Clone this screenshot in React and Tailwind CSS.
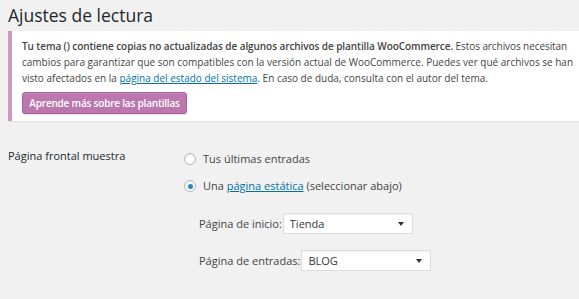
function Radio({ checked }) {
  return (
    <span className="w-[12px] h-[12px] rounded-full border border-[#b4b9be] bg-white shadow-[inset_0_1px_2px_rgba(0,0,0,0.1)] flex items-center justify-center shrink-0">
      {checked && <span className="w-[5px] h-[5px] rounded-full bg-[#1e8cbe]" />}
    </span>
  );
}

function Select({ value }) {
  return (
    <div className="w-[130px] h-[21px] bg-white border border-[#ddd] shadow-[inset_0_1px_2px_rgba(0,0,0,0.07)] flex items-center justify-between pl-[6px] pr-[8px] text-[#32373c]">
      <span>{value}</span>
      <span className="w-0 h-0 border-l-[3px] border-r-[3px] border-t-[4px] border-l-transparent border-r-transparent border-t-[#333]" />
    </div>
  );
}

export default function App() {
  return (
    <div
      className="w-[579px] h-[299px] bg-[#f1f1f1] overflow-hidden text-[11px] text-[#444]"
      style={{ fontFamily: "'Open Sans', 'Noto Sans', sans-serif" }}
    >
      <h1 className="pl-2 h-[31px] leading-[31px] text-[17.5px] font-normal text-[#23282d]">
        Ajustes de lectura
      </h1>

      <div className="ml-2 border-l-4 border-[#cc99c2] bg-white pl-[10px] pt-[7px] pb-[7px] shadow-[0_1px_1px_rgba(0,0,0,0.06)] text-[10px]">
        <div className="leading-[16px] whitespace-nowrap">
          <div className="tracking-[-0.08px]">
            <span className="font-semibold">
              Tu tema () contiene copias no actualizadas de algunos archivos de plantilla WooCommerce.
            </span>{" "}
            Estos archivos necesitan
          </div>
          <div>
            cambios para garantizar que son compatibles con la versión actual de WooCommerce. Puedes ver qué archivos se han
          </div>
          <div>
            visto afectados en la{" "}
            <a className="text-[#0073aa] underline">página del estado del sistema</a>. En caso de duda, consulta con el autor del tema.
          </div>
        </div>
        <div className="mt-[6px] w-[165px] h-[22px] flex items-center justify-center whitespace-nowrap rounded-[3px] bg-[#bb77ae] border border-[#a36597] shadow-[inset_0_1px_0_rgba(255,255,255,0.15),0_1px_0_rgba(0,0,0,0.1)] text-white text-[10px] tracking-[-0.2px] font-semibold">
          Aprende más sobre las plantillas
        </div>
      </div>

      <div className="pl-2 pt-[27px] flex">
        <div className="w-[176px] leading-[16px] font-medium text-[#23282d]">Página frontal muestra</div>
        <div className="pt-[3px] leading-[16px]">
          <div className="flex items-center gap-[7px] h-[16px]">
            <Radio />
            <span>Tus últimas entradas</span>
          </div>
          <div className="flex items-center gap-[7px] h-[16px] mt-[11px]">
            <Radio checked />
            <span>
              Una <a className="text-[#0073aa] underline">página estática</a> (seleccionar abajo)
            </span>
          </div>
          <div className="pl-[15px] mt-[19px] flex flex-col gap-[16px]">
            <div className="flex items-center gap-[1px]">
              <span>Página de inicio:</span>
              <Select value="Tienda" />
            </div>
            <div className="flex items-center gap-[1px]">
              <span>Página de entradas:</span>
              <Select value="BLOG" />
            </div>
          </div>
        </div>
      </div>
    </div>
  );
}
